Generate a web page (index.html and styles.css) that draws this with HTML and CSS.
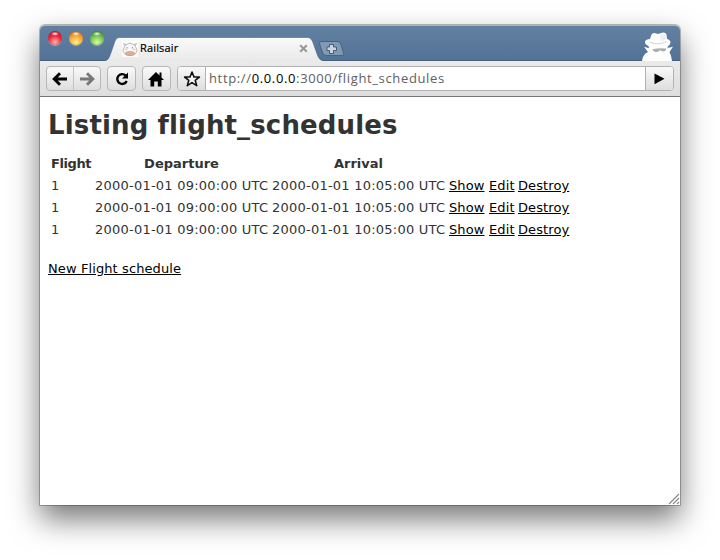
FILE: index.html
```html
<!DOCTYPE html>
<html lang="en">
<head>
<meta charset="utf-8">
<title>Railsair</title>
<link rel="stylesheet" href="styles.css">
</head>
<body>
<div class="window">
  <header class="titlebar">
    <div class="lights"><span class="light red"></span><span class="light yellow"></span><span class="light green"></span></div>
    <div class="tab">
      <svg class="tab-shape" width="222" height="24" viewBox="0 0 222 24">
        <defs><linearGradient id="tabFill" x1="0" y1="0" x2="0" y2="1"><stop offset="0" stop-color="#fafafa"/><stop offset="1" stop-color="#e9e9e9"/></linearGradient></defs>
        <path d="M0 24C4 24 5 21 6.5 17L10 7C11.5 2.5 12.5 .5 16 .5H203C206.500 .5 208 2.500 209.500 7L213 17C214.500 21 216 24 220 24Z" fill="url(#tabFill)"/>
        <path d="M0 23.500C4 23.500 5 21 6.500 17L10 7C11.500 2.500 12.500 .5 16 .5H203C206.500 .5 208 2.500 209.500 7L213 17C214.500 21 216 23.500 220 23.500" fill="none" stroke="#47617e" stroke-opacity=".55"/>
      </svg>
      <svg class="favicon" width="16" height="16" viewBox="0 0 16 16">
        <path fill="#fff" d="M0 0H16V16H0Z"/>
        <path d="M3 5L1.5 2.5 4.5 3.5M13 5L14.5 2.5 11.5 3.5M4.5 3.5Q8 .5 11.5 3.5Q14 5 15 9Q15 14 8 14.5Q1 14 1 9Q2 5 4.5 3.5" fill="#f8f6f6" stroke="#aaa" stroke-width=".8"/>
        <ellipse cx="8" cy="12.5" rx="4.8" ry="2" fill="#dfb08e" stroke="#b99a85" stroke-width=".6"/>
        <path d="M5 6V7.5M10.5 6V7.5" stroke="#999"/><path d="M2.5 8.5H5M11 8.5H13.5" stroke="#f5cbd0" stroke-width="1.5"/>
      </svg>
      <span class="tab-title">Railsair</span>
      <svg class="close" width="9" height="9" viewBox="0 0 9 9"><path d="M1.2 1.2L7.8 7.8M7.8 1.2L1.2 7.8" stroke="#999" stroke-width="2.1"/></svg>
    </div>
    <svg class="new-tab" width="27" height="17" viewBox="0 0 27 17">
      <path d="M3.2 1.5H20Q22 1.5 22.8 4L25.4 12.5Q26 15.5 24 15.5H8Q5.500 15.5 4.6 13L1.6 4Q1 1.5 3.2 1.5Z" fill="#7f9ab7" stroke="#46627f"/>
      <path d="M11.5 4.5H15.5V7H18.5V10.5H15.5V13.5H11.5V10.5H9V7H11.5Z" fill="#c8d5e1" stroke="#4b5d70"/>
    </svg>
    <svg class="incognito" width="34" height="29" viewBox="0 0 34 29">
      <path fill="#fff" d="M1 29Q2 22 7 20L3 14.8L8 16.2L7.5 14Q3.5 12 4 9.5Q5 7 9 7L10.5 2.5Q11 1 13.5 1L17 2L22 .5Q25 .5 25.5 2.5L26 7Q29.5 8 29.5 10.5Q29 13 27 14L26.5 16L32 14.8L28.5 20Q30.5 24 31 29Z"/>
      <path d="M8.5 10Q17 14 25.5 9.2" fill="none" stroke="#d7dce1" stroke-width="1.2"/>
      <path d="M11.5 17.300Q18 15.700 25.5 16.500Q25 19.500 21.500 19.500L18.800 18.200Q17 20.300 14.500 20Q12 19.500 11.5 17.300Z" fill="#aaaeb2"/>
      <path d="M19 3L25 2V8L20 9Z" fill="#eee"/>
    </svg>
  </header>
  <nav class="toolbar">
    <div class="buttons pair">
      <span class="cell"><svg width="16" height="14" viewBox="0 0 16 14"><path d="M15 7H2.5M8 1.3L2.2 7L8 12.7" fill="none" stroke="#000" stroke-width="2.9"/></svg></span>
      <span class="cell"><svg width="16" height="14" viewBox="0 0 16 14"><path d="M1 7H13.5M8 1.3L13.8 7L8 12.7" fill="none" stroke="#777" stroke-width="2.9"/></svg></span>
    </div>
    <div class="buttons single"><svg width="16" height="16" viewBox="0 0 16 16"><path d="M11.500 4.4A4.9 4.9 0 1 0 12.700 10" fill="none" stroke="#000" stroke-width="2.4"/><path d="M14 1.500V7.500H8Z"/></svg></div>
    <div class="buttons single"><svg width="17" height="16" viewBox="0 0 17 16"><path d="M8 1L11.5 4.5V1.5H13.5V6.5L16 9H13.5V15.5H9.8V10.5H6.2V15.5H2.5V9H0Z"/></svg></div>
    <div class="omnibox">
      <span class="star"><svg width="18" height="18" viewBox="0 0 18 18"><path d="M9 2L11 7H16.4L12.2 10.3L13.7 15.7L9 12.6L4.3 15.7L5.8 10.3L1.6 7H7Z" fill="#f4f4f4" stroke="#111" stroke-width="1.6" stroke-linejoin="round"/></svg></span>
      <span class="url">http://<b>0.0.0.0</b>:3000/flight_schedules</span>
      <span class="go"><svg width="11" height="12" viewBox="0 0 11 12"><path d="M.5 .5L10.5 5.7L.5 11.2Z"/></svg></span>
    </div>
  </nav>
  <main class="page">
    <h1>Listing flight_schedules</h1>
    <table>
      <colgroup><col class="c-flight"><col class="c-time"><col class="c-time"><col class="c-show"><col class="c-edit"><col class="c-destroy"></colgroup>
      <tr><th class="th-flight">Flight</th><th>Departure</th><th>Arrival</th></tr>
      <tr><td>1</td><td class="time">2000-01-01 09:00:00 UTC</td><td class="time">2000-01-01 10:05:00 UTC</td><td><a href="#">Show</a></td><td><a href="#">Edit</a></td><td><a href="#">Destroy</a></td></tr>
      <tr><td>1</td><td class="time">2000-01-01 09:00:00 UTC</td><td class="time">2000-01-01 10:05:00 UTC</td><td><a href="#">Show</a></td><td><a href="#">Edit</a></td><td><a href="#">Destroy</a></td></tr>
      <tr><td>1</td><td class="time">2000-01-01 09:00:00 UTC</td><td class="time">2000-01-01 10:05:00 UTC</td><td><a href="#">Show</a></td><td><a href="#">Edit</a></td><td><a href="#">Destroy</a></td></tr>
    </table>
    <a class="new-link" href="#">New Flight schedule</a>
    <svg class="grip" width="12" height="12" viewBox="0 0 12 12"><path d="M1 11L11 1M5 11L11 5M9 11L11 9" stroke="#888" stroke-width="1.1"/></svg>
  </main>
</div>
</body>
</html>
```

FILE: styles.css
```css
* { box-sizing: border-box; }
body { margin: 0; width: 720px; height: 560px; padding: 25px 40px; background: #fff; overflow: hidden; }
.window {
  width: 640px; height: 480px; display: flex; flex-direction: column;
  border-radius: 5px 5px 0 0; background: #fff;
  box-shadow: 0 0 0 1px rgba(0,0,0,.25), 0 14px 30px rgba(0,0,0,.54);
}
.titlebar {
  height: 36px; flex: none; display: flex; align-items: flex-end;
  background: linear-gradient(#6281a2, #527296);
  border-top: 1px solid #a7b5c1; border-bottom: 1px solid #47617e; border-radius: 5px 5px 0 0;
}
.lights { display: flex; gap: 7px; align-self: flex-start; padding: 5px 0 0 8px; width: 64px; flex: none; }
.light { width: 14px; height: 14px; border-radius: 50%; flex: none; box-shadow: 0 1px 0 rgba(255,255,255,.35); }
.red { background: radial-gradient(ellipse 4px 2px at 50% 20%, #fff, transparent), radial-gradient(circle at 50% 80%, #ffb5b5, #ee2637 50%, #8b1823); }
.yellow { background: radial-gradient(ellipse 4px 2px at 50% 20%, #fff, transparent), radial-gradient(circle at 50% 80%, #fff37e, #f49d32 55%, #8c491b); }
.green { background: radial-gradient(ellipse 4px 2px at 50% 20%, #fff, transparent), radial-gradient(circle at 50% 80%, #d4ff99, #6dbb48 55%, #30632a); }
.tab { position: relative; width: 222px; height: 24px; margin: 0 0 -1px; display: flex; align-items: center; flex: none; padding-left: 18px; }
.tab-shape { position: absolute; left: 0; top: 0; }
.favicon { position: relative; margin-top: -1px; }
.tab-title { position: relative; margin: -2px 0 0 2px; font: 11px/14px "Open Sans", sans-serif; letter-spacing: .15px; color: #000; -webkit-text-stroke: .2px #000; }
.close { position: absolute; left: 195px; top: 7px; }
.new-tab { margin: 0 0 3px -8px; flex: none; }
.incognito { margin-left: auto; margin-right: 5px; margin-bottom: -1px; flex: none; }
.toolbar {
  height: 36px; flex: none; display: flex; align-items: center; padding: 0 6px;
  background: linear-gradient(#eaeaea, #dedede); border-bottom: 1px solid #777;
}
.buttons { height: 25px; border: 1px solid #b7b7b7; border-radius: 4px; background: linear-gradient(#f9f9f9, #dedede); display: flex; align-items: center; justify-content: center; margin-right: 6px; }
.pair { width: 55px; }
.cell { flex: 1; height: 23px; display: flex; align-items: center; justify-content: center; }
.cell + .cell { border-left: 1px solid #c4c4c4; }
.single { width: 29px; }
.omnibox { flex: 1; height: 25px; display: flex; align-items: stretch; border: 1px solid #b2b2b2; border-radius: 4px; background: #fff; overflow: hidden; }
.star, .go { width: 28px; display: flex; align-items: center; justify-content: center; background: linear-gradient(#f9f9f9, #dedede); }
.star { border-right: 1px solid #b2b2b2; }
.go { border-left: 1px solid #b2b2b2; }
.url { flex: 1; padding-left: 3px; font: 13px/23px "Open Sans", sans-serif; letter-spacing: .64px; color: #606060; white-space: nowrap; }
.url b { font-weight: 400; color: #000; }
.page { position: relative; flex: 1; padding: 10px 8px 0; font: 13px/18px Verdana, "DejaVu Sans", sans-serif; color: #333; }
h1 { margin: 0; height: 45px; font-size: 26px; line-height: 36px; font-weight: 700; letter-spacing: .14px; white-space: nowrap; }
table { table-layout: fixed; width: 526px; border-collapse: separate; border-spacing: 2px; margin-bottom: 18px; }
th, td { padding: 1px; height: 20px; white-space: nowrap; }
td { text-align: left; }
.th-flight { letter-spacing: -.4px; text-align: left; }
.time { letter-spacing: .23px; }
.c-flight { width: 42px; }
.c-time { width: 175px; }
.c-show { width: 38px; }
.c-edit { width: 27px; }
.c-destroy { width: 55px; }
a { color: #000; letter-spacing: .1px; }
.new-link { display: block; width: max-content; }
.grip { position: absolute; right: 0; bottom: 0; }
```
